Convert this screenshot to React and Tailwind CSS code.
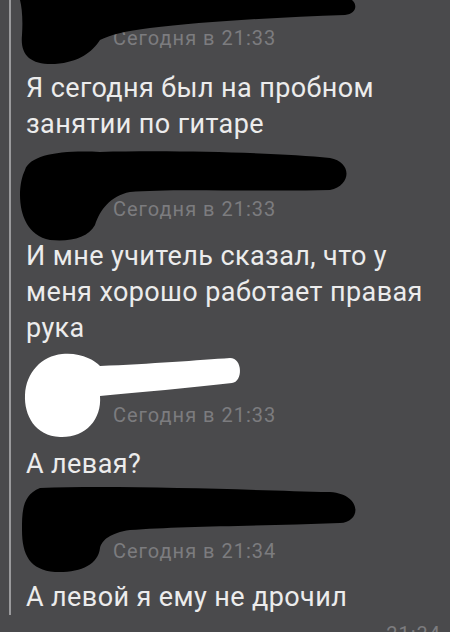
export default function App() {
  const stamp = "ml-[87px] h-[24px] text-[20px] leading-[24px] tracking-[1px] text-[#7c7c7f] whitespace-nowrap";
  const msg = "text-[27px] leading-[36px] tracking-[0.4px] text-[#ececec] whitespace-nowrap";

  return (
    <div className="relative w-[450px] h-[632px] overflow-hidden bg-[#4a4a4c] font-['Roboto',sans-serif]">
      <div className="ml-[9px] border-l-2 border-[#9a9a9c] pl-[15px] pt-[26px]">
        <div className={stamp}>Сегодня в 21:33</div>
        <div className={`${msg} mt-5`}>
          Я сегодня был на пробном
          <br />
          занятии по гитаре
        </div>

        <div className={`${stamp} mt-[55px]`}>Сегодня в 21:33</div>
        <div className={`${msg} mt-[17px]`}>
          И мне учитель сказал, что у
          <br />
          меня хорошо работает правая
          <br />
          рука
        </div>

        <div className={`${stamp} mt-[57px]`}>Сегодня в 21:33</div>
        <div className={`${msg} mt-[19px]`}>А левая?</div>

        <div className={`${stamp} mt-[57px]`}>Сегодня в 21:34</div>
        <div className={`${msg} mt-4`}>А левой я ему не дрочил</div>
      </div>
      <div className="mt-[7px] pr-[9px] text-right text-[20px] leading-[24px] tracking-[1px] text-[#7c7c7f]">
        21:34
      </div>

      {/* scribbled-out names */}
      <svg
        className="pointer-events-none absolute inset-0"
        width="450"
        height="632"
        viewBox="0 0 450 632"
        aria-hidden="true"
      >
        <path
          d="M20 0 L352 0 C358 5 356 14 345 15 C280 17 200 22 150 28 C125 31 110 35 100 40 C92 52 80 62 55 64 C30 65 20 55 22 35 C23 20 22 8 20 0 Z"
          fill="#000"
        />
        <path
          d="M25 170 C30 155 60 150 100 152 C180 150 280 153 330 158 C352 162 352 185 330 190 C260 192 170 188 130 192 C110 196 100 210 95 225 C88 238 70 242 50 240 C28 236 20 215 20 195 C20 185 22 176 25 170 Z"
          fill="#000"
        />
        <path
          d="M62 354 C80 352 95 360 100 366 C150 364 200 360 230 358 C243 358 243 382 232 383 C190 388 140 392 100 396 C102 420 85 438 60 437 C35 436 24 415 25 395 C26 372 42 356 62 354 Z"
          fill="#fff"
        />
        <path
          d="M40 488 C120 485 250 490 330 492 C362 494 362 522 340 523 C260 526 180 526 130 530 C110 533 102 540 100 548 C98 565 80 573 55 572 C30 570 22 555 22 530 C22 512 22 495 40 488 Z"
          fill="#000"
        />
      </svg>
    </div>
  );
}
